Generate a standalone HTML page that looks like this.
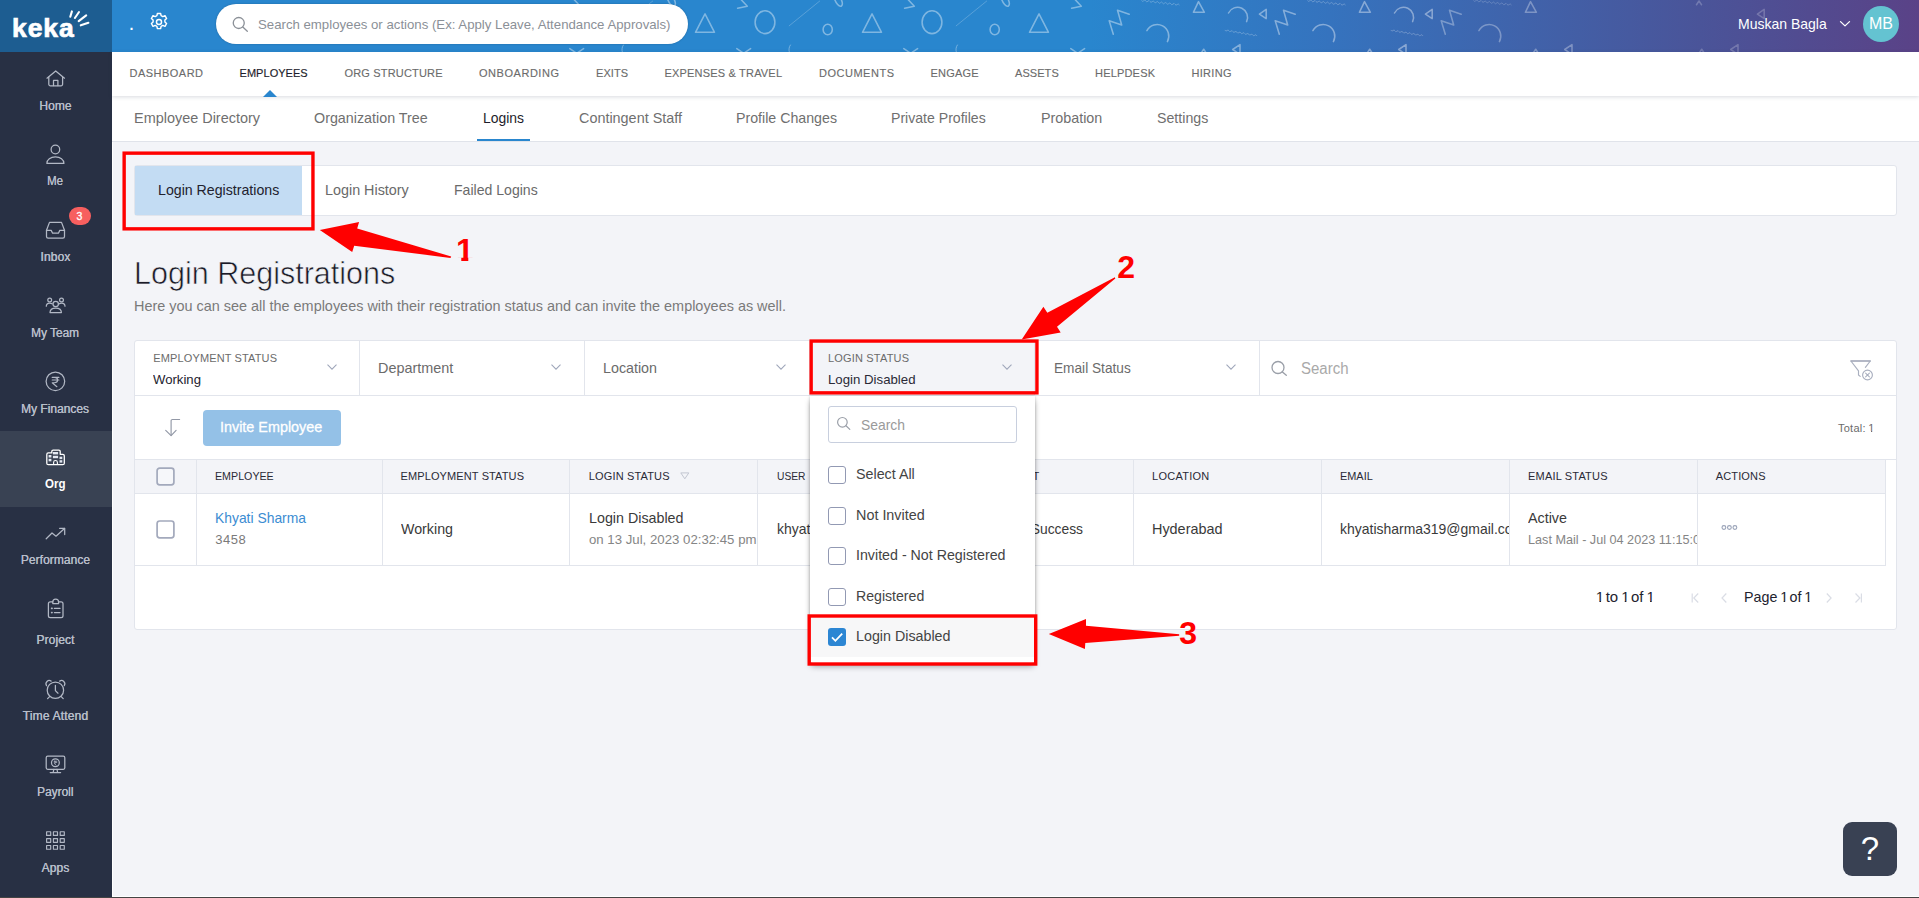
<!DOCTYPE html>
<html lang="en"><head><meta charset="utf-8"><title>Keka - Login Registrations</title>
<style>
*{box-sizing:border-box;margin:0;padding:0}
html,body{width:1919px;height:898px;overflow:hidden}
body{position:relative;background:#f3f4f8;font-family:"Liberation Sans",sans-serif;}
.a{position:absolute}
.t{position:absolute;white-space:pre;font-family:"Liberation Sans",sans-serif;transform-origin:0 50%;}
.clip{position:absolute;overflow:hidden}
.clip .t{left:0}
.hdr{left:0;top:0;width:1919px;height:52px;background:linear-gradient(90deg,#2986ce 0,#2986ce 1090px,#3573be 1330px,#4a5499 1700px,#5a4287 1919px);overflow:hidden}
.logo{left:0;top:0;width:112px;height:52px;background:#1d5d91}
.side{left:0;top:52px;width:112px;height:846px;background:#283044}
.side .act{left:0;top:379px;width:112px;height:76px;background:#394253}
.pill{left:216px;top:4px;width:472px;height:40px;border-radius:20px;background:#fff;box-shadow:0 0 2px rgba(0,0,0,.25)}
.nav1{left:112px;top:52px;width:1807px;height:44.2px;background:#fff;box-shadow:0 1px 4px rgba(40,50,80,.18);z-index:3}
.nav2{left:112px;top:96px;width:1807px;height:46px;background:#fff;border-bottom:1px solid #e0e3ea;z-index:2}
.card{background:#fff;border:1px solid #e2e5ec;border-radius:3px}
.red{border:3px solid #ff0000;z-index:20}
.cb{width:18px;height:18px;border:1px solid #9299b3;border-radius:3px;background:#fff}
.vl{width:1px;background:#e2e5ec}
.hl{height:1px;background:#e2e5ec}
svg{position:absolute;overflow:visible}
</style></head><body>
<!-- header -->
<div class="a hdr"><svg class="a" style="left:0;top:0" width="1919" height="52" viewBox="0 0 1919 52"><g fill="none" stroke="#fff" stroke-width="1.55" stroke-linejoin="round" stroke-linecap="round" opacity="0.40"><g><path d="M538.0 13.9L528.5 32.3H547.5z"/><path d="M574.0 -0.5L580.3 6.3L570.6 8.2"/><path d="M569.8 48.6L583.6 58M583.6 48.6L569.8 58"/><ellipse cx="598.0" cy="22.2" rx="9.9" ry="11.4"/><ellipse cx="660.7" cy="29.5" rx="4.6" ry="5.3"/><path d="M622.2 25.8L653.0 0.8" stroke-width=".8" stroke-dasharray="1.2 .7" opacity=".7"/><path d="M667.5 -1C669.0 3 672.0 7.5 674.5 6C676.0 4.5 675.0 1 674.0 -1" /><path d="M622.3 52C621.6 49.5 622.0 47 623.4 45" stroke-width=".9"/></g>
<g><path d="M705.0 13.9L695.5 32.3H714.5z"/><path d="M741.0 -0.5L747.3 6.3L737.6 8.2"/><path d="M736.8 48.6L750.6 58M750.6 48.6L736.8 58"/><ellipse cx="765.0" cy="22.2" rx="9.9" ry="11.4"/><ellipse cx="827.7" cy="29.5" rx="4.6" ry="5.3"/><path d="M789.2 25.8L820.0 0.8" stroke-width=".8" stroke-dasharray="1.2 .7" opacity=".7"/><path d="M834.5 -1C836.0 3 839.0 7.5 841.5 6C843.0 4.5 842.0 1 841.0 -1" /><path d="M789.3 52C788.6 49.5 789.0 47 790.4 45" stroke-width=".9"/></g>
<g><path d="M872.0 13.9L862.5 32.3H881.5z"/><path d="M908.0 -0.5L914.3 6.3L904.6 8.2"/><path d="M903.8 48.6L917.6 58M917.6 48.6L903.8 58"/><ellipse cx="932.0" cy="22.2" rx="9.9" ry="11.4"/><ellipse cx="994.7" cy="29.5" rx="4.6" ry="5.3"/><path d="M956.2 25.8L987.0 0.8" stroke-width=".8" stroke-dasharray="1.2 .7" opacity=".7"/><path d="M1001.5 -1C1003.0 3 1006.0 7.5 1008.5 6C1010.0 4.5 1009.0 1 1008.0 -1" /><path d="M956.3 52C955.6 49.5 956.0 47 957.4 45" stroke-width=".9"/></g>
<g><path d="M1039.0 13.9L1029.5 32.3H1048.5z"/><path d="M1075.0 -0.5L1081.3 6.3L1071.6 8.2"/><path d="M1070.8 48.6L1084.6 58M1084.6 48.6L1070.8 58"/></g>
<g opacity="1"><path d="M1113.3 34.2L1109.2 20.8L1121.7 25L1117.5 10.3L1129.2 14.2"/><path d="M1146.9 30.6A10.8 10.8 0 0 1 1167.4 41.6"/><path d="M1141.7 0.5L1142.7 1.4L1143.8 0.7L1144.9 0.1L1145.9 1.0L1146.8 1.9L1148.0 1.2L1149.1 0.5L1150.0 1.5L1151.0 2.4L1152.1 1.7L1153.2 1.0L1154.2 1.9L1155.2 2.8L1156.3 2.2L1157.4 1.5L1158.4 2.4L1159.3 3.3L1160.5 2.7L1161.6 2.0L1162.5 2.9L1163.5 3.8L1164.6 3.1L1165.7 2.5L1166.7 3.4L1167.7 4.3L1168.8 3.6L1169.9 2.9L1170.9 3.8L1171.8 4.8L1173.0 4.1L1174.1 3.4L1175.0 4.3L1176.0 5.2L1177.1 4.6L1178.2 3.9L1179.2 4.8" stroke-width=".8" opacity=".8"/><path d="M1198.5 1.6L1193.4 12.3H1204.4z"/><path d="M1228.5 13A9.6 9.6 0 0 1 1246.6 21.6"/><path d="M1225.0 30.2L1225.9 31.1L1227.0 30.5L1228.1 30.0L1229.0 30.9L1229.8 31.7L1230.9 31.2L1232.1 30.7L1232.9 31.6L1233.8 32.4L1234.9 31.9L1236.0 31.4L1236.9 32.2L1237.8 33.1L1238.9 32.6L1240.0 32.0L1240.8 32.9L1241.7 33.8L1242.8 33.2L1243.9 32.7L1244.8 33.6L1245.7 34.4L1246.8 33.9L1247.9 33.4L1248.8 34.2L1249.6 35.1L1250.8 34.6L1251.9 34.1L1252.7 34.9L1253.6 35.8L1254.7 35.3L1255.8 34.7L1256.7 35.6" stroke-width=".8" opacity=".8"/><path d="M1259.4 14.2L1266.2 9.4V18.6z"/><path d="M1232.7 49.5L1240.0 44.6V54.4z"/><path d="M1201.2 53L1203.7 49.2L1206.2 53"/></g>
<g opacity="1"><path d="M1279.3 34.2L1275.2 20.8L1287.7 25L1283.5 10.3L1295.2 14.2"/><path d="M1312.9 30.6A10.8 10.8 0 0 1 1333.4 41.6"/><path d="M1307.7 0.5L1308.7 1.4L1309.8 0.7L1310.9 0.1L1311.9 1.0L1312.8 1.9L1314.0 1.2L1315.1 0.5L1316.0 1.5L1317.0 2.4L1318.1 1.7L1319.2 1.0L1320.2 1.9L1321.2 2.8L1322.3 2.2L1323.4 1.5L1324.4 2.4L1325.3 3.3L1326.5 2.7L1327.6 2.0L1328.5 2.9L1329.5 3.8L1330.6 3.1L1331.7 2.5L1332.7 3.4L1333.7 4.3L1334.8 3.6L1335.9 2.9L1336.9 3.8L1337.8 4.8L1339.0 4.1L1340.1 3.4L1341.0 4.3L1342.0 5.2L1343.1 4.6L1344.2 3.9L1345.2 4.8" stroke-width=".8" opacity=".8"/><path d="M1364.5 1.6L1359.4 12.3H1370.4z"/><path d="M1394.5 13A9.6 9.6 0 0 1 1412.6 21.6"/><path d="M1391.0 30.2L1391.9 31.1L1393.0 30.5L1394.1 30.0L1395.0 30.9L1395.8 31.7L1396.9 31.2L1398.1 30.7L1398.9 31.6L1399.8 32.4L1400.9 31.9L1402.0 31.4L1402.9 32.2L1403.8 33.1L1404.9 32.6L1406.0 32.0L1406.8 32.9L1407.7 33.8L1408.8 33.2L1409.9 32.7L1410.8 33.6L1411.7 34.4L1412.8 33.9L1413.9 33.4L1414.8 34.2L1415.6 35.1L1416.8 34.6L1417.9 34.1L1418.7 34.9L1419.6 35.8L1420.7 35.3L1421.8 34.7L1422.7 35.6" stroke-width=".8" opacity=".8"/><path d="M1425.4 14.2L1432.2 9.4V18.6z"/><path d="M1398.7 49.5L1406.0 44.6V54.4z"/><path d="M1367.2 53L1369.7 49.2L1372.2 53"/></g>
<g opacity="0.8"><path d="M1445.3 34.2L1441.2 20.8L1453.7 25L1449.5 10.3L1461.2 14.2"/><path d="M1478.9 30.6A10.8 10.8 0 0 1 1499.4 41.6"/><path d="M1473.7 0.5L1474.7 1.4L1475.8 0.7L1476.9 0.1L1477.9 1.0L1478.8 1.9L1480.0 1.2L1481.1 0.5L1482.0 1.5L1483.0 2.4L1484.1 1.7L1485.2 1.0L1486.2 1.9L1487.2 2.8L1488.3 2.2L1489.4 1.5L1490.4 2.4L1491.3 3.3L1492.5 2.7L1493.6 2.0L1494.5 2.9L1495.5 3.8L1496.6 3.1L1497.7 2.5L1498.7 3.4L1499.7 4.3L1500.8 3.6L1501.9 2.9L1502.9 3.8L1503.8 4.8L1505.0 4.1L1506.1 3.4L1507.0 4.3L1508.0 5.2L1509.1 4.6L1510.2 3.9L1511.2 4.8" stroke-width=".8" opacity=".8"/><path d="M1530.5 1.6L1525.4 12.3H1536.4z"/><path d="M1564.7 49.5L1572.0 44.6V54.4z"/><path d="M1533.2 53L1535.7 49.2L1538.2 53"/></g>
<g opacity="0.55"><path d="M1696.5 4.8L1699.0 1L1701.5 4.8"/><path d="M1757.4 14.2L1764.2 9.4V18.6z"/><path d="M1730.7 49.5L1738.0 44.6V54.4z"/><path d="M1699.2 53L1701.7 49.2L1704.2 53"/></g></g></svg></div>
<div class="a logo"></div>
<span class="t" style="left:12px;top:12.8px;font-size:26.5px;line-height:30px;font-weight:700;color:#fff;letter-spacing:0.9px;-webkit-text-stroke:0.7px #fff">keka</span>
<svg class="a" style="left:0;top:0" width="112" height="52"><g stroke="#fff" stroke-width="2.1" stroke-linecap="round" fill="none"><path d="M71.9 11.4L70.3 16.8M79 12L74.9 18M86.2 15.4L78.7 21.2M88.4 22.8L80.8 25.3"/></g></svg>
<span class="t" style="left:129.5px;top:15.2px;font-size:14px;line-height:20px;color:#fff;font-weight:700">.</span>
<svg class="a" style="left:148.7px;top:12.3px" width="20" height="20" viewBox="-10 -10 20 20"><g fill="none" stroke="#fff" stroke-width="1.45" stroke-linejoin="round"><circle r="2.55"/><path id="gear" d="M-1.6 -8.6h3.2l.5 2.3 1.7.9 2.2-.9 1.6 2.8-1.7 1.5v2l1.7 1.5-1.6 2.8-2.2-.9-1.7.9-.5 2.3h-3.2l-.5-2.3-1.7-.9-2.2.9-1.6-2.8 1.7-1.5v-2l-1.7-1.5 1.6-2.8 2.2.9 1.7-.9z"/></g></svg>
<div class="a pill"></div>
<svg class="a" style="left:230px;top:14px" width="20" height="20"><g fill="none" stroke="#8b9097" stroke-width="1.3" stroke-linecap="round"><circle cx="8.75" cy="9" r="5.5"/><path d="M12.8 13.1L17.3 17.3"/></g></svg>
<svg class="a" style="left:1838px;top:19px" width="14" height="10"><path d="M2.5 2.6L7 6.9L11.5 2.6" fill="none" stroke="#fff" stroke-width="1.3" stroke-linecap="round" stroke-linejoin="round"/></svg>
<div class="a" style="left:1863px;top:5.75px;width:36px;height:36px;border-radius:50%;background:#64c3d1"></div>

<!-- sidebar -->
<div class="a side"><div class="a act"></div></div>
<svg class="a" style="left:0;top:0" width="112" height="898"><g fill="none" stroke="#b2b8c5" stroke-width="1.25" stroke-linecap="round" stroke-linejoin="round">
<!-- home -->
<path d="M47 78.2L55.7 71L64.5 78.2"/><path d="M48.8 77.2V84.2a1.6 1.6 0 0 0 1.6 1.6H61a1.6 1.6 0 0 0 1.6-1.6V77.2"/><path d="M53.5 85.6V80.4h4.4V85.6"/>
<!-- me -->
<circle cx="55.4" cy="149.5" r="4.3"/><path d="M46.9 163.4c0-3.9 3.6-6.5 8.5-6.5s8.5 2.6 8.5 6.5z"/>
<!-- inbox -->
<path d="M46.5 230.2L49.5 222.4H61.5L64.5 230.2V236.6a1.6 1.6 0 0 1-1.6 1.6H48.1a1.6 1.6 0 0 1-1.6-1.6z"/><path d="M46.5 230.4H51.2L52.6 233.2H58.4L59.8 230.4H64.5"/>
<!-- team -->
<circle cx="55.7" cy="304" r="2.7"/><path d="M50 312.6c0-2.9 2.4-4.6 5.7-4.6s5.7 1.700 5.700 4.600z"/>
<circle cx="49.700" cy="300" r="1.900"/><circle cx="61.500" cy="300" r="1.900"/>
<path d="M46.300 306.200c0-2 1.400-3.200 3.400-3.200 1 0 1.800.3 2.400.800"/><path d="M65 306.200c0-2-1.400-3.200-3.400-3.200-1 0-1.800.3-2.400.800"/>
<!-- finances -->
<circle cx="55.400" cy="381.300" r="9.300"/>
<path d="M52.200 377.400H58.900M52.200 380H58.900M52.200 377.400h2.200c2 0 3.200 1.100 3.200 2.600s-1.200 2.700-3.200 2.700h-2.200l4.700 4" stroke-width="1.150"/>
<!-- performance -->
<path d="M46.200 538.800L52 533l4 3.200L64.500 528.500"/><path d="M59.600 528.300H64.700V534.500"/>
<!-- project -->
<path d="M52.600 601.900H50.300a1.900 1.900 0 0 0-1.900 1.900V615.800a1.900 1.900 0 0 0 1.900 1.900H61.100a1.900 1.900 0 0 0 1.900-1.900V603.800a1.900 1.900 0 0 0-1.900-1.900H58.800"/>
<path d="M52.800 603.600V602a2.900 2.900 0 0 1 5.800 0v1.600z"/>
<path d="M54.400 608.400H60M54.400 612.600H60"/><path d="M51.600 608.400h.5M51.600 612.600h.5" stroke-width="1.600"/>
<!-- time -->
<circle cx="55.400" cy="690.200" r="8.200"/><path d="M55.400 685.400V690.600L58 693.200"/>
<path d="M46.500 685.600a3.300 3.300 0 0 1 4.600-4.500"/><path d="M64.300 685.600a3.300 3.300 0 0 0-4.600-4.500"/><path d="M49.600 696.600L47.600 698.600M61.200 696.600L63.200 698.600"/>
<!-- payroll -->
<rect x="46.200" y="756.200" width="18.600" height="13.100" rx="1.500"/><path d="M53.800 769.400L53.200 772.400M57 769.400L57.600 772.400M50.200 772.600H60.600"/>
<circle cx="55.400" cy="762.700" r="3.900"/><path d="M54.200 761.200H56.800M54.200 762.300H56.800M54.300 761.200c2.200 0 2.200 2.300 0 2.300l1.800 1.700" stroke-width=".8"/>
<!-- apps -->
<g stroke-width="1.150"><path d="M46.600 831.700h4.100v3.700h-4.100zM53.400 831.700h4.100v3.700h-4.100zM60.200 831.700h4.100v3.700h-4.100zM46.600 838.600h4.100v3.700h-4.100zM53.400 838.600h4.100v3.700h-4.100zM60.200 838.600h4.100v3.700h-4.100zM46.600 845.500h4.100v3.700h-4.100zM53.400 845.500h4.100v3.700h-4.100zM60.200 845.500h4.100v3.700h-4.100z"/></g>
</g>
<!-- org (active) -->
<g fill="none" stroke="#fff" stroke-width="1.3" stroke-linejoin="round" stroke-linecap="round">
<path d="M51.800 452.900V451.400a1.300 1.300 0 0 1 1.300-1.300h5.800a1.300 1.300 0 0 1 1.300 1.300V454.300H62.800a1.500 1.500 0 0 1 1.500 1.500V463.200a1.500 1.500 0 0 1-1.500 1.500H48.300a1.500 1.500 0 0 1-1.500-1.500V454.400a1.500 1.500 0 0 1 1.500-1.500z"/>
<path d="M53.600 464.500V462.400a1.900 1.900 0 0 1 3.800 0V464.500" stroke-width="1.100"/>
</g>
<g fill="#e3e8f2" stroke="none">
<rect x="52.900" y="452" width="5.200" height="2.400"/><rect x="52.900" y="455.800" width="5.200" height="2.400"/>
<rect x="48.600" y="455" width="2.800" height="2.500"/><rect x="48.600" y="458.800" width="2.800" height="2.500"/>
<rect x="59.500" y="456.700" width="2.800" height="2.400"/><rect x="59.500" y="460.200" width="2.800" height="2.400"/>
</g></svg>


<!-- nav -->
<div class="a nav1"></div>
<div class="a nav2"></div>
<svg class="a" style="left:262.5px;top:89.5px;z-index:4" width="14" height="7"><path d="M0 7L7 0L14 7z" fill="#2986ce"/></svg>
<div class="a" style="left:477px;top:139px;width:52.5px;height:2px;background:#2986ce;z-index:4"></div>

<!-- tab card -->
<div class="a card" style="left:134px;top:165px;width:1763px;height:51px"></div>
<div class="a" style="left:135px;top:166px;width:167px;height:49px;background:#c3dcf3"></div>

<!-- main card -->
<div class="a card" style="left:134px;top:340px;width:1763px;height:289.5px"></div>
<div class="a hl" style="left:135px;top:395px;width:1761px"></div>
<div class="a vl" style="left:359px;top:341px;height:54px"></div>
<div class="a vl" style="left:584px;top:341px;height:54px"></div>
<div class="a vl" style="left:809px;top:341px;height:54px"></div>
<div class="a vl" style="left:1034px;top:341px;height:54px"></div>
<div class="a vl" style="left:1259px;top:341px;height:54px"></div>
<div class="a" style="left:810px;top:341px;width:224px;height:54px;background:#f3f4f8"></div>
<!-- chevrons -->
<svg class="a" style="left:327px;top:364px" width="10" height="6"><path d="M.5 .7L5 5.2L9.5 .7" fill="none" stroke="#9ea6ba" stroke-width="1.05"/></svg>
<svg class="a" style="left:550.75px;top:364px" width="10" height="6"><path d="M.5 .7L5 5.2L9.5 .7" fill="none" stroke="#9ea6ba" stroke-width="1.05"/></svg>
<svg class="a" style="left:775.75px;top:364px" width="10" height="6"><path d="M.5 .7L5 5.2L9.5 .7" fill="none" stroke="#9ea6ba" stroke-width="1.05"/></svg>
<svg class="a" style="left:1001.5px;top:364px" width="10" height="6"><path d="M.5 .7L5 5.2L9.5 .7" fill="none" stroke="#9ea6ba" stroke-width="1.05"/></svg>
<svg class="a" style="left:1225.5px;top:364px" width="10" height="6"><path d="M.5 .7L5 5.2L9.5 .7" fill="none" stroke="#9ea6ba" stroke-width="1.05"/></svg>
<!-- search icon in filter row -->
<svg class="a" style="left:1268px;top:358px" width="22" height="22"><g fill="none" stroke="#9a9fa8" stroke-width="1.3" stroke-linecap="round"><circle cx="10" cy="9.5" r="6"/><path d="M14.4 13.9L18.3 17.3"/></g></svg>
<!-- clear filter icon -->
<svg class="a" style="left:1848px;top:358px" width="28" height="24"><g fill="none" stroke="#a9afbf" stroke-width="1.15" stroke-linejoin="round" stroke-linecap="round"><path d="M17.400 9.400L22.300 3L2.900 3L10.500 12.900V17L12.200 18.400"/><path d="M3 2.900H22.200" stroke-width="1.500"/><circle cx="19.500" cy="17" r="4.900"/><path d="M17.600 15.100L21.400 18.900M21.400 15.100L17.600 18.900" stroke-width="1.050"/></g></svg>
<!-- toolbar -->
<svg class="a" style="left:163px;top:417px" width="20" height="22"><g fill="none" stroke="#9298a6" stroke-width="1.15" stroke-linecap="round" stroke-linejoin="round"><path d="M16.6 2.5H9.4a1.300 1.300 0 0 0-1.300 1.300V18.300"/><path d="M2.700 13.300L8.100 18.600L13.100 13.300"/></g></svg>
<div class="a" style="left:203px;top:410px;width:138px;height:35.5px;border-radius:4px;background:#94c1e7"></div>
<!-- table header -->
<div class="a" style="left:135px;top:460px;width:1750.5px;height:33px;background:#f3f4f8"></div>
<div class="a hl" style="left:135px;top:459px;width:1761px"></div>
<div class="a hl" style="left:135px;top:493px;width:1750.5px"></div>
<div class="a hl" style="left:135px;top:565px;width:1750.5px"></div>
<div class="a vl" style="left:196px;top:460px;height:105px"></div>
<div class="a vl" style="left:382px;top:460px;height:105px"></div>
<div class="a vl" style="left:569px;top:460px;height:105px"></div>
<div class="a vl" style="left:757px;top:460px;height:105px"></div>
<div class="a vl" style="left:945px;top:460px;height:105px"></div>
<div class="a vl" style="left:1133px;top:460px;height:105px"></div>
<div class="a vl" style="left:1321px;top:460px;height:105px"></div>
<div class="a vl" style="left:1509px;top:460px;height:105px"></div>
<div class="a vl" style="left:1697px;top:460px;height:105px"></div>
<div class="a vl" style="left:1885px;top:460px;height:105px"></div>

<svg class="a" style="left:150px;top:460px" width="30" height="90"><g fill="#fff" stroke="#a3a9bc" stroke-width="1.7"><rect x="7.1" y="8.1" width="16.8" height="16.8" rx="2.6" fill="#f6f7fa"/><rect x="7.1" y="61" width="16.8" height="16.8" rx="2.6"/></g></svg>
<svg class="a" style="left:680px;top:471.5px" width="10" height="9"><path d="M.8 .9H8.8L4.8 6.8z" fill="none" stroke="#c2c6d1" stroke-width="1" stroke-linejoin="round"/></svg>
<svg class="a" style="left:1720px;top:523px" width="20" height="9"><g fill="none" stroke="#9aa3b8" stroke-width="1.1"><circle cx="3.9" cy="4.5" r="1.9"/><circle cx="9.4" cy="4.5" r="1.9"/><circle cx="14.9" cy="4.5" r="1.9"/></g></svg>
<!-- pagination icons -->
<svg class="a" style="left:1690px;top:592px" width="180" height="12"><g fill="none" stroke="#dadde5" stroke-width="1.2"><path d="M2.2 1.5V10.5M8.2 1.5L3.8 6L8.2 10.5"/><path d="M36.3 1.5L32 6L36.3 10.5"/><path d="M136.8 1.5L141.1 6L136.8 10.5"/><path d="M165.5 1.5L169.9 6L165.5 10.5M171.4 1.5V10.5"/></g></svg>

<!-- dropdown -->
<div class="a" style="left:810px;top:396px;width:225px;height:267px;background:#fff;box-shadow:0 4px 6px -1px rgba(0,0,0,.4),0 0 3px rgba(0,0,0,.22);border-radius:0 0 3px 3px;z-index:10"></div>
<div class="a" style="left:810px;top:617px;width:225px;height:40px;background:#f7f7f8;z-index:11"></div>
<div class="a" style="left:828px;top:406px;width:189px;height:36.5px;border:1px solid #c8cfde;border-radius:3px;z-index:11"></div>
<svg class="a" style="left:834px;top:414px;z-index:12" width="20" height="20"><g fill="none" stroke="#9a9fa8" stroke-width="1.2" stroke-linecap="round"><circle cx="8.4" cy="8.3" r="4.8"/><path d="M12 11.8L15.8 15.4"/></g></svg>
<div class="a cb" style="left:828px;top:466px;z-index:12"></div>
<div class="a cb" style="left:828px;top:507px;z-index:12"></div>
<div class="a cb" style="left:828px;top:547px;z-index:12"></div>
<div class="a cb" style="left:828px;top:588px;z-index:12"></div>
<div class="a" style="left:828px;top:628px;width:18px;height:18px;border-radius:3px;background:#2c86d3;z-index:12"></div>
<svg class="a" style="left:828px;top:628px;z-index:13" width="18" height="18"><path d="M4 9.4L7.4 12.8L14.2 5.6" fill="none" stroke="#fff" stroke-width="1.8"/></svg>

<!-- annotations -->
<svg class="a" style="left:0;top:0;z-index:21" width="1919" height="898"><g fill="none" stroke="#ff0000" stroke-width="3.4"><rect x="124.15" y="153.15" width="188.8" height="75.7"/><rect x="811.15" y="341.05" width="225.8" height="51.8"/><rect x="809.2" y="616" width="226.5" height="48"/></g>
<g fill="#ff0000">
<path d="M319.8 230.1L359.1 222.1L357.2 228.6L451.2 256.5L450.5 257.9L354.2 245.8L352.2 252.1z"/>
<path d="M1021.7 339.4L1043.4 306.8L1047.3 312.7L1114.9 277.3L1115.3 278.4L1057 326.8L1060.7 332.6z"/>
<path d="M1048.8 634L1086 619L1086 625.8L1179.2 634.2L1179.2 635.8L1085.3 643L1084.9 649z"/>
</g></svg>

<!-- help -->
<div class="a" style="left:1843px;top:822px;width:54px;height:54px;border-radius:9px;background:#394153"></div>
<!-- inbox badge -->
<div class="a" style="left:68.5px;top:206.5px;width:22.5px;height:18px;border-radius:9px;background:#f75f5f"></div>
<!-- edges -->
<div class="a" style="left:112px;top:141px;width:1px;height:756px;background:#fff"></div>
<div class="a" style="left:112px;top:896px;width:1807px;height:1px;background:#fff"></div>
<div class="a" style="left:0;top:897px;width:1919px;height:1px;background:#444;z-index:30"></div>

<div style="position:absolute;left:0;top:0;z-index:5">
<span class="t" style="left:258.25px;top:17.57px;font-size:13.5px;line-height:13.5px;color:#8b9097;transform:scaleX(0.9781);">Search employees or actions (Ex: Apply Leave, Attendance Approvals)</span>
<span class="t" style="left:1737.5px;top:16.30px;font-size:15px;line-height:15px;color:#ffffff;transform:scaleX(0.9336);">Muskan Bagla</span>
<span class="t" style="left:1868.9px;top:15.96px;font-size:16px;line-height:16px;color:#ffffff;letter-spacing:0.1px;">MB</span>
<span class="t" style="left:129.5px;top:67.69px;font-size:11px;line-height:11px;color:#6b6b6b;letter-spacing:0.477px;-webkit-text-stroke:0.12px #6b6b6b;">DASHBOARD</span>
<span class="t" style="left:344.5px;top:67.69px;font-size:11px;line-height:11px;color:#6b6b6b;letter-spacing:0.171px;-webkit-text-stroke:0.12px #6b6b6b;">ORG STRUCTURE</span>
<span class="t" style="left:479px;top:67.69px;font-size:11px;line-height:11px;color:#6b6b6b;letter-spacing:0.535px;-webkit-text-stroke:0.12px #6b6b6b;">ONBOARDING</span>
<span class="t" style="left:596px;top:67.69px;font-size:11px;line-height:11px;color:#6b6b6b;letter-spacing:0.051px;-webkit-text-stroke:0.12px #6b6b6b;">EXITS</span>
<span class="t" style="left:664.5px;top:67.69px;font-size:11px;line-height:11px;color:#6b6b6b;letter-spacing:0.186px;-webkit-text-stroke:0.12px #6b6b6b;">EXPENSES &amp; TRAVEL</span>
<span class="t" style="left:819px;top:67.69px;font-size:11px;line-height:11px;color:#6b6b6b;letter-spacing:0.514px;-webkit-text-stroke:0.12px #6b6b6b;">DOCUMENTS</span>
<span class="t" style="left:930.5px;top:67.69px;font-size:11px;line-height:11px;color:#6b6b6b;letter-spacing:0.184px;-webkit-text-stroke:0.12px #6b6b6b;">ENGAGE</span>
<span class="t" style="left:1015px;top:67.69px;font-size:11px;line-height:11px;color:#6b6b6b;letter-spacing:0.069px;-webkit-text-stroke:0.12px #6b6b6b;">ASSETS</span>
<span class="t" style="left:1095px;top:67.69px;font-size:11px;line-height:11px;color:#6b6b6b;letter-spacing:0.185px;-webkit-text-stroke:0.12px #6b6b6b;">HELPDESK</span>
<span class="t" style="left:1191.5px;top:67.69px;font-size:11px;line-height:11px;color:#6b6b6b;letter-spacing:0.3px;-webkit-text-stroke:0.12px #6b6b6b;">HIRING</span>
<span class="t" style="left:239.5px;top:67.69px;font-size:11px;line-height:11px;color:#1d1d2b;letter-spacing:0.043px;-webkit-text-stroke:0.15px #1d1d2b;">EMPLOYEES</span>
<span class="t" style="left:134px;top:110.30px;font-size:15px;line-height:15px;color:#6f6f6f;transform:scaleX(0.9626);">Employee Directory</span>
<span class="t" style="left:314px;top:110.30px;font-size:15px;line-height:15px;color:#6f6f6f;transform:scaleX(0.954);">Organization Tree</span>
<span class="t" style="left:578.5px;top:110.30px;font-size:15px;line-height:15px;color:#6f6f6f;transform:scaleX(0.9598);">Contingent Staff</span>
<span class="t" style="left:735.5px;top:110.30px;font-size:15px;line-height:15px;color:#6f6f6f;transform:scaleX(0.9463);">Profile Changes</span>
<span class="t" style="left:891px;top:110.30px;font-size:15px;line-height:15px;color:#6f6f6f;transform:scaleX(0.9393);">Private Profiles</span>
<span class="t" style="left:1040.75px;top:110.30px;font-size:15px;line-height:15px;color:#6f6f6f;transform:scaleX(0.9538);">Probation</span>
<span class="t" style="left:1156.5px;top:110.30px;font-size:15px;line-height:15px;color:#6f6f6f;transform:scaleX(0.9455);">Settings</span>
<span class="t" style="left:482.5px;top:110.30px;font-size:15px;line-height:15px;color:#1d1d2b;transform:scaleX(0.9275);">Logins</span>
<span class="t" style="left:157.75px;top:182.30px;font-size:15px;line-height:15px;color:#22222e;transform:scaleX(0.9442);">Login Registrations</span>
<span class="t" style="left:324.5px;top:182.30px;font-size:15px;line-height:15px;color:#6a6a6a;transform:scaleX(0.9566);">Login History</span>
<span class="t" style="left:453.75px;top:182.30px;font-size:15px;line-height:15px;color:#6a6a6a;transform:scaleX(0.9385);">Failed Logins</span>
<span class="t" style="left:133.8px;top:258.35px;font-size:30.6px;line-height:30.6px;color:#1b1b27;transform:scaleX(0.9977);-webkit-text-stroke:0.6px #f3f4f8;">Login Registrations</span>
<span class="t" style="left:133.8px;top:299.03px;font-size:14.5px;line-height:14.5px;color:#7a7a7a;transform:scaleX(0.995);">Here you can see all the employees with their registration status and can invite the employees as well.</span>
<span class="t" style="left:153.25px;top:352.69px;font-size:11px;line-height:11px;color:#6b6b6b;letter-spacing:0.132px;">EMPLOYMENT STATUS</span>
<span class="t" style="left:153.25px;top:372.57px;font-size:13.5px;line-height:13.5px;color:#22222e;transform:scaleX(0.974);">Working</span>
<span class="t" style="left:378.25px;top:360.30px;font-size:15px;line-height:15px;color:#6b6b6b;transform:scaleX(0.9601);">Department</span>
<span class="t" style="left:603.25px;top:360.30px;font-size:15px;line-height:15px;color:#6b6b6b;transform:scaleX(0.9521);">Location</span>
<span class="t" style="left:828px;top:352.69px;font-size:11px;line-height:11px;color:#6b6b6b;letter-spacing:0.178px;">LOGIN STATUS</span>
<span class="t" style="left:828px;top:372.57px;font-size:13.5px;line-height:13.5px;color:#2a2a36;transform:scaleX(0.9797);">Login Disabled</span>
<span class="t" style="left:1053.5px;top:360.30px;font-size:15px;line-height:15px;color:#6b6b6b;transform:scaleX(0.9115);">Email Status</span>
<span class="t" style="left:1300.5px;top:361.06px;font-size:16px;line-height:16px;color:#a9a9a9;transform:scaleX(0.9368);">Search</span>
<span class="t" style="left:220.25px;top:419.10px;font-size:15px;line-height:15px;color:#ffffff;transform:scaleX(0.958);-webkit-text-stroke:0.3px #fff;">Invite Employee</span>
<span class="t" style="left:1837.9px;top:422.59px;font-size:11px;line-height:11px;color:#6b6b6b;letter-spacing:0.285px;">Total: <span style="display:inline-block;clip-path:polygon(0 0,100% 0,100% 8.46px,3.87px 8.46px,3.87px 100%,2.64px 100%,2.64px 8.46px,0 8.46px);margin:0 -1.92px 0 -0.88px">1</span></span>
<span class="t" style="left:215.25px;top:470.69px;font-size:11px;line-height:11px;color:#2a2a36;transform:scaleX(0.9706);">EMPLOYEE</span>
<span class="t" style="left:400.5px;top:470.69px;font-size:11px;line-height:11px;color:#2a2a36;letter-spacing:0.116px;">EMPLOYMENT STATUS</span>
<span class="t" style="left:588.75px;top:470.69px;font-size:11px;line-height:11px;color:#2a2a36;letter-spacing:0.155px;">LOGIN STATUS</span>
<span class="t" style="left:1152px;top:470.69px;font-size:11px;line-height:11px;color:#2a2a36;letter-spacing:0.261px;">LOCATION</span>
<span class="t" style="left:1340.25px;top:470.69px;font-size:11px;line-height:11px;color:#2a2a36;transform:scaleX(0.992);">EMAIL</span>
<span class="t" style="left:1528px;top:470.69px;font-size:11px;line-height:11px;color:#2a2a36;letter-spacing:0.189px;">EMAIL STATUS</span>
<span class="t" style="left:1715.75px;top:470.69px;font-size:11px;line-height:11px;color:#2a2a36;letter-spacing:0.141px;">ACTIONS</span>
<span class="t" style="left:215.25px;top:509.80px;font-size:15px;line-height:15px;color:#3b8cd2;transform:scaleX(0.9249);">Khyati Sharma</span>
<span class="t" style="left:215.25px;top:532.75px;font-size:13px;line-height:13px;color:#7a7a7a;letter-spacing:0.526px;">3458</span>
<span class="t" style="left:400.5px;top:520.55px;font-size:15px;line-height:15px;color:#3a3a3a;transform:scaleX(0.9498);">Working</span>
<span class="t" style="left:588.75px;top:509.80px;font-size:15px;line-height:15px;color:#3a3a3a;transform:scaleX(0.9521);">Login Disabled</span>
<span class="t" style="left:1152px;top:521.05px;font-size:15px;line-height:15px;color:#3a3a3a;transform:scaleX(0.9606);">Hyderabad</span>
<span class="t" style="left:1528px;top:509.80px;font-size:15px;line-height:15px;color:#3a3a3a;transform:scaleX(0.9545);">Active</span>
<span class="t" style="left:39.15px;top:99.84px;font-size:12px;line-height:12px;color:#b7bdc9;letter-spacing:0.095px;text-shadow:0.35px 0 0 #b7bdc9;">Home</span>
<span class="t" style="left:47.349999999999994px;top:174.84px;font-size:12px;line-height:12px;color:#b7bdc9;transform:scaleX(0.9537);text-shadow:0.35px 0 0 #b7bdc9;">Me</span>
<span class="t" style="left:40.349999999999994px;top:250.84px;font-size:12px;line-height:12px;color:#b7bdc9;letter-spacing:0.135px;text-shadow:0.35px 0 0 #b7bdc9;">Inbox</span>
<span class="t" style="left:31.349999999999998px;top:326.84px;font-size:12px;line-height:12px;color:#b7bdc9;transform:scaleX(0.9883);text-shadow:0.35px 0 0 #b7bdc9;">My Team</span>
<span class="t" style="left:21.4px;top:402.84px;font-size:12px;line-height:12px;color:#b7bdc9;transform:scaleX(0.9966);text-shadow:0.35px 0 0 #b7bdc9;">My Finances</span>
<span class="t" style="left:45.05px;top:477.84px;font-size:12px;line-height:12px;color:#ffffff;font-weight:700;transform:scaleX(0.9605);">Org</span>
<span class="t" style="left:20.699999999999996px;top:553.84px;font-size:12px;line-height:12px;color:#b7bdc9;letter-spacing:0.05px;text-shadow:0.35px 0 0 #b7bdc9;">Performance</span>
<span class="t" style="left:36.3px;top:633.84px;font-size:12px;line-height:12px;color:#b7bdc9;letter-spacing:0.107px;text-shadow:0.35px 0 0 #b7bdc9;">Project</span>
<span class="t" style="left:22.599999999999994px;top:709.84px;font-size:12px;line-height:12px;color:#b7bdc9;letter-spacing:0.181px;text-shadow:0.35px 0 0 #b7bdc9;">Time Attend</span>
<span class="t" style="left:37.15px;top:785.84px;font-size:12px;line-height:12px;color:#b7bdc9;transform:scaleX(0.9894);text-shadow:0.35px 0 0 #b7bdc9;">Payroll</span>
<span class="t" style="left:41.4px;top:861.84px;font-size:12px;line-height:12px;color:#b7bdc9;letter-spacing:0.147px;text-shadow:0.35px 0 0 #b7bdc9;">Apps</span>
<span class="t" style="left:76.6px;top:210.61px;font-size:10.5px;line-height:10.5px;color:#ffffff;-webkit-text-stroke:0.3px #fff;">3</span>
<div class="clip" style="left:588.75px;top:530.17px;width:168.25px;height:21.5px"><span class="t" style="top:3px;font-size:13.5px;line-height:13.5px;color:#858585;transform:scaleX(0.9787);">on 13 Jul, 2023 02:32:45 pm</span></div>
<div class="clip" style="left:776.5px;top:517.55px;width:168.5px;height:23px"><span class="t" style="top:3px;font-size:15px;line-height:15px;color:#3a3a3a;transform:scaleX(0.931);">khyatisharma319@gmail.com</span></div>
<div class="clip" style="left:1340.25px;top:517.55px;width:168.75px;height:23px"><span class="t" style="top:3px;font-size:15px;line-height:15px;color:#3a3a3a;transform:scaleX(0.931);">khyatisharma319@gmail.com</span></div>
<div class="clip" style="left:1528px;top:530.17px;width:169px;height:21.5px"><span class="t" style="top:3px;font-size:13.5px;line-height:13.5px;color:#858585;transform:scaleX(0.9369);">Last Mail - Jul 04 2023 11:15:06 am</span></div>
<span class="t" style="left:776.5px;top:470.69px;font-size:11px;line-height:11px;color:#2a2a36;transform:scaleX(0.9325);">USER</span>
<span class="t" style="left:961.5px;top:470.69px;font-size:11px;line-height:11px;color:#2a2a36;transform:scaleX(0.9622);">LAST ATTEMPT</span>
<span class="t" style="left:992.5px;top:521.05px;font-size:15px;line-height:15px;color:#3a3a3a;transform:scaleX(0.9225);">Login Success</span>
<span class="t" style="left:1860.7px;top:832.37px;font-size:33px;line-height:33px;color:#ffffff;">?</span>
<span class="t" style="left:1596.5px;top:589.40px;font-size:15px;line-height:15px;color:#22222e;transform:scaleX(0.9971);"><span style="display:inline-block;clip-path:polygon(0 0,100% 0,100% 11.53px,5.28px 11.53px,5.28px 100%,3.6px 100%,3.6px 11.53px,0 11.53px);margin:0 -2.62px 0 -1.2px">1</span> to <span style="display:inline-block;clip-path:polygon(0 0,100% 0,100% 11.53px,5.28px 11.53px,5.28px 100%,3.6px 100%,3.6px 11.53px,0 11.53px);margin:0 -2.62px 0 -1.2px">1</span> of <span style="display:inline-block;clip-path:polygon(0 0,100% 0,100% 11.53px,5.28px 11.53px,5.28px 100%,3.6px 100%,3.6px 11.53px,0 11.53px);margin:0 -2.62px 0 -1.2px">1</span></span>
<span class="t" style="left:1744.3px;top:589.40px;font-size:15px;line-height:15px;color:#22222e;transform:scaleX(0.9515);">Page <span style="display:inline-block;clip-path:polygon(0 0,100% 0,100% 11.53px,5.28px 11.53px,5.28px 100%,3.6px 100%,3.6px 11.53px,0 11.53px);margin:0 -2.62px 0 -1.2px">1</span> of <span style="display:inline-block;clip-path:polygon(0 0,100% 0,100% 11.53px,5.28px 11.53px,5.28px 100%,3.6px 100%,3.6px 11.53px,0 11.53px);margin:0 -2.62px 0 -1.2px">1</span></span>
</div>
<div style="position:absolute;left:0;top:0;z-index:25">
<span class="t" style="left:860.5px;top:417.30px;font-size:15px;line-height:15px;color:#9a9a9a;transform:scaleX(0.9257);">Search</span>
<span class="t" style="left:855.5px;top:466.00px;font-size:15.3px;line-height:15.3px;color:#444;transform:scaleX(0.9337);">Select All</span>
<span class="t" style="left:855.5px;top:506.75px;font-size:15.3px;line-height:15.3px;color:#444;transform:scaleX(0.9402);">Not Invited</span>
<span class="t" style="left:855.5px;top:546.75px;font-size:15.3px;line-height:15.3px;color:#444;transform:scaleX(0.9303);">Invited - Not Registered</span>
<span class="t" style="left:855.5px;top:587.50px;font-size:15.3px;line-height:15.3px;color:#444;transform:scaleX(0.9225);">Registered</span>
<span class="t" style="left:855.5px;top:627.50px;font-size:15.3px;line-height:15.3px;color:#444;transform:scaleX(0.9338);">Login Disabled</span>
<span class="t" style="left:455.9px;top:233.91px;font-size:32px;line-height:32px;color:#ff0000;font-weight:700;clip-path:polygon(0 0,18px 0,18px 23.3px,12.4px 23.3px,12.4px 32px,5.4px 32px,5.4px 23.3px,0 23.3px);">1</span>
<span class="t" style="left:1117.3px;top:251.41px;font-size:32px;line-height:32px;color:#ff0000;font-weight:700;">2</span>
<span class="t" style="left:1179.2px;top:617.11px;font-size:32px;line-height:32px;color:#ff0000;font-weight:700;">3</span>
</div>
</body></html>
